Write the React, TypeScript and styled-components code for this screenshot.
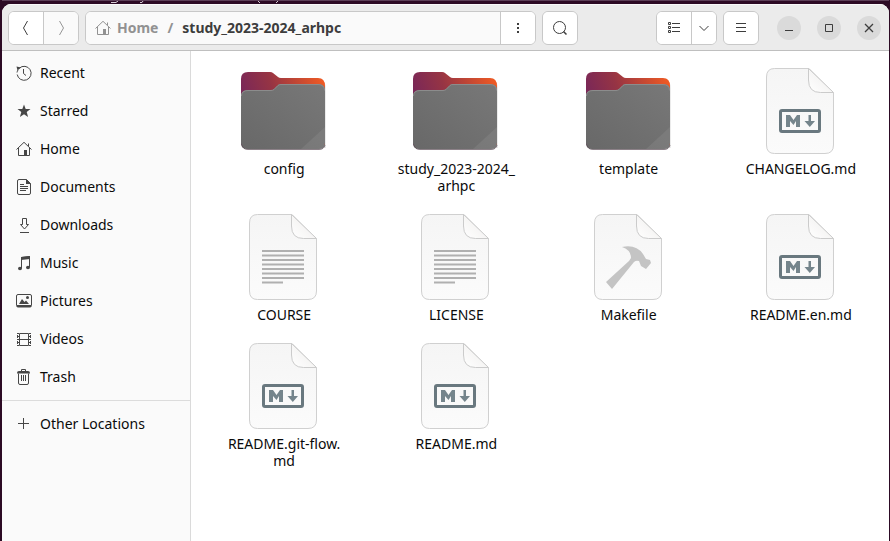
import React, { ReactNode } from "react";
import styled, { createGlobalStyle } from "styled-components";

const GlobalStyle = createGlobalStyle`
  * { box-sizing: border-box; }
  html { background: #2c0a24; }
  body {
    margin: 0;
    font-family: "Noto Sans", "Open Sans", sans-serif;
    font-size: 14px;
    color: #0a0a0a;
  }
  button { font: inherit; color: inherit; padding: 0; border: 0; background: none; }
  svg { display: block; flex: none; }
`;

const Desktop = styled.div`
  display: flex;
  flex-direction: column;
  min-height: 100vh;
  padding: 0 1px 0 2px;
  background: #2c0a24;
`;

const Backdrop = styled.div`
  height: 4px;
  border-top: 1px solid #5c3f57;
`;

const Window = styled.div`
  flex: 1;
  display: flex;
  flex-direction: column;
  background: #fff;
  border-radius: 9px 9px 0 0;
  overflow: hidden;
`;

const HeaderBar = styled.header`
  display: flex;
  align-items: center;
  gap: 6px;
  height: 47px;
  padding: 0 8px 0 6px;
  background: #ebebeb;
  border-top: 1px solid #f9f9f9;
  border-bottom: 1px solid #bfbfbf;
  color: #3d3d3d;
`;

const ButtonGroup = styled.div<{ $fill?: boolean }>`
  display: flex;
  flex: ${(p) => (p.$fill ? "0 1 451px" : "none")};
  height: 34px;
  border: 1px solid #c8c8c8;
  border-radius: 6px;
  background: #fff;
  overflow: hidden;
`;

const ToolButton = styled.button<{ $width?: number; $muted?: boolean }>`
  display: flex;
  align-items: center;
  justify-content: center;
  width: ${(p) => p.$width ?? 34}px;
  background: ${(p) => (p.$muted ? "#fafafa" : "#fff")};
  color: ${(p) => (p.$muted ? "#959595" : "#3d3d3d")};
  & + &, nav + & { border-left: 1px solid #c8c8c8; }
`;

const PathBar = styled.nav`
  flex: 1;
  display: flex;
  align-items: center;
  gap: 9px;
  padding-left: 9px;
  background: #fafafa;
  color: #929292;
  font-weight: 700;
  white-space: nowrap;
`;

const Crumb = styled.a<{ $current?: boolean }>`
  display: flex;
  align-items: center;
  gap: 6px;
  color: ${(p) => (p.$current ? "#3d3d3d" : "inherit")};
  text-decoration: none;
`;

const Spacer = styled.div`
  flex: 1;
`;

const WindowControls = styled.div`
  display: flex;
  gap: 16px;
  margin-left: 12px;
`;

const RoundButton = styled.button`
  display: flex;
  align-items: center;
  justify-content: center;
  width: 24px;
  height: 24px;
  border-radius: 50%;
  background: #dadada;
`;

const Body = styled.div`
  flex: 1;
  display: flex;
`;

const Sidebar = styled.aside`
  flex: none;
  width: 189px;
  padding-top: 3px;
  background: #fafafa;
  border-right: 1px solid #dadada;
`;

const Place = styled.a`
  display: flex;
  align-items: center;
  gap: 8px;
  height: 38px;
  padding-left: 14px;
  color: inherit;
  text-decoration: none;
  svg { color: #464646; }
`;

const PlaceName = styled.span`
  padding-bottom: 2px;
`;

const Divider = styled.hr`
  margin: 4px 0;
  border: 0;
  border-top: 1px solid #dcdcdc;
`;

const Files = styled.main`
  flex: 1;
  display: grid;
  grid-template-columns: repeat(auto-fill, minmax(170px, 1fr));
  align-content: start;
  row-gap: 15px;
  padding: 12px 2px 12px 7px;
`;

const FileItem = styled.a`
  display: flex;
  flex-direction: column;
  align-items: center;
  gap: 1px;
  color: inherit;
  text-decoration: none;
`;

const FileName = styled.span`
  max-width: 128px;
  line-height: 17px;
  text-align: center;
`;

const Icon = ({ children, size = 16 }: { children: ReactNode; size?: number }) => (
  <svg width={size} height={size} viewBox="0 0 16 16" fill="none" stroke="currentColor" aria-hidden="true">
    {children}
  </svg>
);

const HomeShape = () => (
  <>
    <path d="M.5 8.500 8 1.300l7.500 7.200M2.500 7v7.500h11V7M12.500 5V2.500" />
    <path d="M8 9h3v5H8z" fill="currentColor" stroke="none" />
  </>
);

const places: { name: string; icon: ReactNode }[] = [
  {
    name: "Recent",
    icon: (
      <>
        <path d="M3.300 3.200A7 7 0 1 1 1.200 9.500M7.500 4v4.500l2.500 2" />
        <path d="M1 7.500a7 7 0 0 1 1-2.500" />
        <path d="M.5 1.500 5 2.500 1.500 5.500z" fill="currentColor" stroke="none" />
      </>
    ),
  },
  {
    name: "Starred",
    icon: <path d="M8 1.500l1.700 4.500h4.800l-3.800 3 1.400 5L8 11.200 3.900 14l1.400-5-3.800-3h4.800z" fill="currentColor" stroke="none" />,
  },
  { name: "Home", icon: <HomeShape /> },
  {
    name: "Documents",
    icon: (
      <>
        <path d="M3 .5h7.500l4 4V14a1.500 1.500 0 0 1-1.500 1.500H3A1.500 1.500 0 0 1 1.500 14V2A1.500 1.500 0 0 1 3 .5zM4 5.500h4M4 7.500h8M4 9.500h8M4 11.500h6" />
        <path d="M10 0l5 5h-5z" fill="currentColor" stroke="none" />
      </>
    ),
  },
  { name: "Downloads", icon: <path d="M6.500 1.500h4v6h2L8.500 12l-4-4.500h2zM4 15.500h9" /> },
  {
    name: "Music",
    icon: (
      <>
        <path d="M5.500 13V2.500l8-1V12" />
        <path d="M5 2l9-1v3L5 5z" fill="currentColor" stroke="none" />
        <ellipse cx="4" cy="13.500" rx="2" ry="1.700" fill="currentColor" stroke="none" />
        <ellipse cx="12" cy="12.500" rx="2" ry="1.700" fill="currentColor" stroke="none" />
      </>
    ),
  },
  {
    name: "Pictures",
    icon: (
      <>
        <rect x=".5" y="1.500" width="15" height="12.500" rx="1.500" />
        <path d="M1 12h14v2H1zM3 11l3-5 2.500 3L10 7.500l3 3.500z" fill="currentColor" stroke="none" />
        <circle cx="11.500" cy="4.500" r="1.500" fill="currentColor" stroke="none" />
      </>
    ),
  },
  {
    name: "Videos",
    icon: (
      <>
        <path d="M3.500 2.500h9v12h-9zM3.500 8.500h9" />
        <path d="M1.500 2v13M14.500 2v13" strokeDasharray="1 1" />
        <path d="M1 2.500h2M1 5.500h2M1 8.500h2M1 11.500h2M1 14.500h2M13 2.500h2M13 5.500h2M13 8.500h2M13 11.500h2M13 14.500h2" />
      </>
    ),
  },
  {
    name: "Trash",
    icon: (
      <>
        <path d="M2.500 4.500V14q0 1.500 1.500 1.500h7q1.500 0 1.500-1.500V4.500M5.500 6v6M7.500 6v6M9.500 6v6M5.500 3V.5h4V3" />
        <path d="M1 4.500V4q0-2 2-2h9q2 0 2 2v.5z" fill="currentColor" stroke="none" />
      </>
    ),
  },
];

const Gradients = () => (
  <svg width="0" height="0" aria-hidden="true">
    <defs>
      <linearGradient id="folder-back" x1="0" y1="0.500" x2="1" y2="0.200">
        <stop offset="0" stopColor="#74255c" />
        <stop offset=".42" stopColor="#963444" />
        <stop offset="1" stopColor="#ee5a24" />
      </linearGradient>
      <linearGradient id="folder-front" x1="0" y1="1" x2="1" y2="0">
        <stop offset="0" stopColor="#686868" />
        <stop offset="1" stopColor="#787878" />
      </linearGradient>
      <linearGradient id="paper" x1="0" y1="0" x2="0" y2="1">
        <stop offset="0" stopColor="#f5f5f5" />
        <stop offset="1" stopColor="#fbfbfb" />
      </linearGradient>
      <linearGradient id="fold" x1="0" y1="1" x2="1" y2="0">
        <stop offset="0" stopColor="#fff" />
        <stop offset=".6" stopColor="#f4f3f2" />
      </linearGradient>
    </defs>
  </svg>
);

const Folder = () => (
  <svg width="96" height="96" viewBox="0 0 96 96" aria-hidden="true">
    <path d="M6 83V16q0-6 6-6h23q2 0 3 1l5 4q1 1 3 1h37q6 0 6 7v60z" fill="#000" opacity=".08" transform="translate(1 2)" />
    <path d="M5 82V16q0-7 7-7h22q2 0 3 1l5 4q1 1 3 1h37q7 0 7 8v59z" fill="url(#folder-back)" />
    <path d="M5 33q0-6 7-6h23q2 0 3-1l4-4q1-1 3-1h37q7 0 7 6v53q0 6-6 6H11q-6 0-6-6z" fill="url(#folder-front)" />
    <path d="M5.500 33q0-5.500 6.500-5.500h23q2 0 3-1l4-4q1-1 3-1h37q6.500 0 6.500 6" fill="none" stroke="#8c8c8c" />
    <path d="M65 86l24-22v16q0 6-6 6z" fill="#fff" opacity=".07" />
    <path d="M6 82q1 4.500 6 4.500h71q5 0 6-4.500" fill="none" stroke="#5b4b56" opacity=".7" />
  </svg>
);

const Page = ({ children }: { children: ReactNode }) => (
  <svg width="96" height="96" viewBox="0 0 96 96" aria-hidden="true">
    <path d="M21.500 5.500H56l24.500 24.500V82q0 8.500-8.500 8.500H21.500q-8 0-8-8.500V14q0-8.500 8-8.500z" fill="url(#paper)" stroke="#d0d0d0" />
    <path d="M55.500 5.500V17q0 12.500 12 12.500h13z" fill="url(#fold)" stroke="#cbcbcb" strokeLinejoin="round" />
    {children}
  </svg>
);

const Markdown = () => (
  <Page>
    <rect x="27.500" y="47.500" width="39" height="21" rx="1.500" fill="none" stroke="#69787f" strokeWidth="3" />
    <path d="M33 64V52h4l3.500 5 3.500-5h3v12h-4v-6l-2.500 4L37 58v6z" fill="#75858c" />
    <path d="M55.500 52h2.500v6h4l-5.200 6-5.300-6h4z" fill="#75858c" />
  </Page>
);

const TextPage = () => (
  <Page>
    <path d="M26 42h42M26 46.500h42M26 51h42M26 55.500h42M26 60h42M26 64.500h42M26 69h42M26 73.500h21" stroke="#b0b0b0" strokeWidth="1.800" />
  </Page>
);

const Makefile = () => (
  <Page>
    <path d="M41 38q14-3 21 7l3 5 4 1 1 3-5 6-5-3-2-5q-3-1-5 1L31 80l-6-7 23-21 2-3q0-8-9-11z" fill="#c4c4c4" />
  </Page>
);

const files: { name: string; label?: ReactNode; icon: ReactNode }[] = [
  { name: "config", icon: <Folder /> },
  { name: "study_2023-2024_arhpc", label: <>study_2023-2024_<wbr />arhpc</>, icon: <Folder /> },
  { name: "template", icon: <Folder /> },
  { name: "CHANGELOG.md", icon: <Markdown /> },
  { name: "COURSE", icon: <TextPage /> },
  { name: "LICENSE", icon: <TextPage /> },
  { name: "Makefile", icon: <Makefile /> },
  { name: "README.en.md", icon: <Markdown /> },
  { name: "README.git-flow.md", label: <>README.git-flow.<wbr />md</>, icon: <Markdown /> },
  { name: "README.md", icon: <Markdown /> },
];

export default function App() {
  return (
    <Desktop>
      <GlobalStyle />
      <Backdrop>
        <svg width="300" height="3" viewBox="0 0 300 3" fill="none" stroke="#d8ccd6" aria-hidden="true">
          <path d="M109 1.500h5l2-1.500M138 1.500h2l1-1.500M256 0l2 2M276 0l-2 2" />
        </svg>
      </Backdrop>
      <Window>
        <HeaderBar>
          <ButtonGroup>
            <ToolButton aria-label="Back">
              <Icon><path d="M9.500 1 5.500 8l4 7" /></Icon>
            </ToolButton>
            <ToolButton aria-label="Forward" $muted $width={35}>
              <Icon><path d="M6.500 1l4 7-4 7" /></Icon>
            </ToolButton>
          </ButtonGroup>
          <ButtonGroup $fill>
            <PathBar aria-label="Path">
              <Crumb href="#home"><Icon><HomeShape /></Icon>Home</Crumb>
              <span>/</span>
              <Crumb href="#study" $current>study_2023-2024_arhpc</Crumb>
            </PathBar>
            <ToolButton aria-label="Folder menu" $width={35}>
              <Icon><path d="M7 3h2v2H7zM7 7h2v2H7zM7 11h2v2H7z" fill="currentColor" stroke="none" /></Icon>
            </ToolButton>
          </ButtonGroup>
          <ButtonGroup>
            <ToolButton aria-label="Search">
              <Icon><circle cx="7.500" cy="7.500" r="6" /><path d="M11.500 11.500l3 3" strokeWidth="1.500" /></Icon>
            </ToolButton>
          </ButtonGroup>
          <Spacer />
          <ButtonGroup>
            <ToolButton aria-label="List view">
              <Icon>
                <path d="M2.500 2.500h2v2h-2zM2.500 6.500h2v2h-2zM2.500 10.500h2v2h-2zM6 3.500h8M6 7.500h8M6 11.500h8" />
              </Icon>
            </ToolButton>
            <ToolButton aria-label="View options" $width={25}>
              <Icon><path d="M3.500 6 8 10.500 12.500 6" /></Icon>
            </ToolButton>
          </ButtonGroup>
          <ButtonGroup>
            <ToolButton aria-label="Main menu">
              <Icon><path d="M3 3.500h10M3 7.500h10M3 11.500h10" /></Icon>
            </ToolButton>
          </ButtonGroup>
          <WindowControls>
            <RoundButton aria-label="Minimize"><Icon><path d="M4 10.500h8" /></Icon></RoundButton>
            <RoundButton aria-label="Maximize"><Icon><path d="M4.500 4.500h7v7h-7z" /></Icon></RoundButton>
            <RoundButton aria-label="Close"><Icon><path d="M4 4l8 8M12 4l-8 8" strokeWidth="1.300" /></Icon></RoundButton>
          </WindowControls>
        </HeaderBar>
        <Body>
          <Sidebar>
            {places.map((p) => (
              <Place key={p.name} href={`#${p.name}`}>
                <Icon>{p.icon}</Icon>
                <PlaceName>{p.name}</PlaceName>
              </Place>
            ))}
            <Divider />
            <Place href="#other">
              <Icon><path d="M7.500 2v11M2 7.500h11" /></Icon>
              <PlaceName>Other Locations</PlaceName>
            </Place>
          </Sidebar>
          <Files>
            {files.map((f) => (
              <FileItem key={f.name} href={`#${f.name}`}>
                {f.icon}
                <FileName>{f.label ?? f.name}</FileName>
              </FileItem>
            ))}
          </Files>
        </Body>
      </Window>
      <Gradients />
    </Desktop>
  );
}
